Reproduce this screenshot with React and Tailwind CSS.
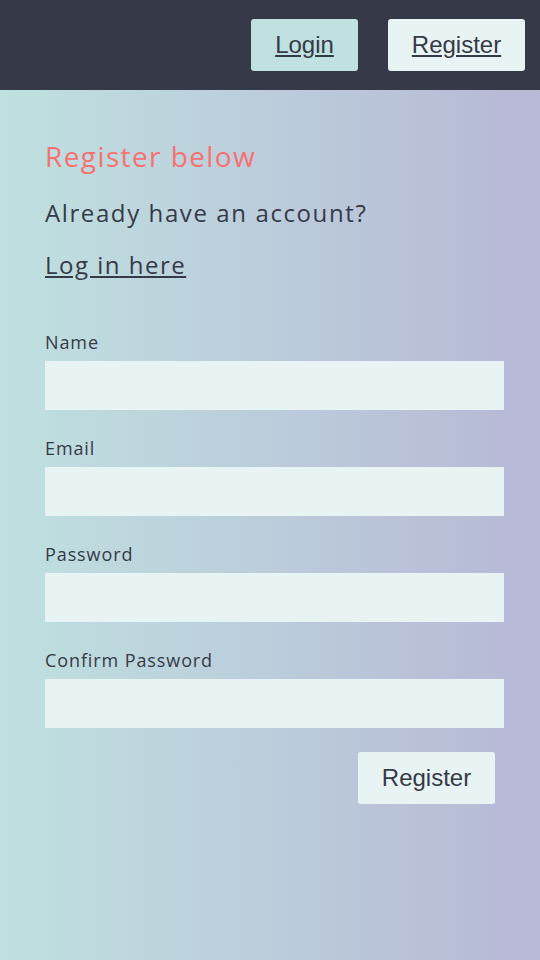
export default function App() {
  const fields = ['Name', 'Email', 'Password', 'Confirm Password']

  return (
    <div className="min-h-[960px] flex flex-col bg-gradient-to-r from-[#bfe1e0] to-[#b7b8d6]" style={{ fontFamily: '"Open Sans", sans-serif' }}>
      {/* Nav */}
      <header className="h-[90px] bg-[#363a48] flex items-center justify-end pr-[15px] gap-[30px]">
        <a href="#" className="h-[52px] w-[107px] flex items-center justify-center rounded-[3px] bg-[#bfe1e0] text-[#363a48] underline text-[24px]" style={{ fontFamily: '"Liberation Sans", Arial, sans-serif' }}>
          Login
        </a>
        <a href="#" className="h-[52px] w-[137px] flex items-center justify-center rounded-[3px] bg-[#e8f4f3] text-[#363a48] underline text-[24px]" style={{ fontFamily: '"Liberation Sans", Arial, sans-serif' }}>
          Register
        </a>
      </header>

      <main className="px-[45px] pt-[45px] text-[#363a48]">
        <h1 className="text-[28px] leading-[42px] tracking-[1.4px] text-[#f87171]">Register below</h1>
        <p className="mt-[18px] text-[24px] leading-[36px] tracking-[1.6px]">Already have an account?</p>
        <a href="#" className="block mt-[16px] text-[24px] leading-[36px] tracking-[1.5px] underline w-fit">Log in here</a>

        <form className="mt-[47px] flex flex-col">
          {fields.map((f, i) => (
            <div key={f} className={i > 0 ? 'mt-[26px]' : ''}>
              <label className="block text-[18px] leading-[24px] tracking-[0.9px]">{f}</label>
              <input className="mt-[7px] block w-[459px] h-[49px] bg-[#e8f4f3] outline-none" type={f.includes('Password') ? 'password' : 'text'} />
            </div>
          ))}
          <div className="flex justify-end mt-[24px]">
            <button type="button" className="h-[52px] w-[137px] rounded-[3px] bg-[#e8f4f3] text-[#363a48] text-[24px]" style={{ fontFamily: '"Liberation Sans", Arial, sans-serif' }}>
              Register
            </button>
          </div>
        </form>
      </main>
    </div>
  )
}
